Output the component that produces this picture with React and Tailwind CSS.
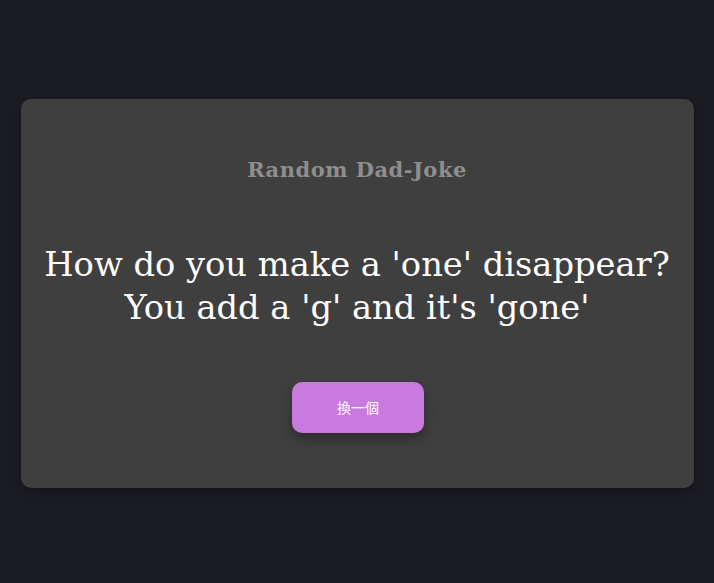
export default function App() {
  return (
    <div className="min-h-screen w-full bg-[#1b1b22] flex items-center justify-center pt-[4px]">
      <div className="w-[673px] h-[389px] bg-[#3f3f3f] rounded-[10px] shadow-[0_4px_10px_rgba(0,0,0,0.25)] flex flex-col items-center pt-[57px]">
        <h1 className="font-['DejaVu_Serif',serif] font-bold text-[21px] leading-[28px] text-[#8e8e8e] tracking-[0.5px]">
          Random Dad-Joke
        </h1>
        <p className="mt-[59px] font-['DejaVu_Serif',serif] text-[33.7px] leading-[43px] text-white text-center">
          How do you make a 'one' disappear?
          <br />
          You add a 'g' and it's 'gone'
        </p>
        <button className="mt-[53px] ml-[2px] w-[132px] h-[51px] rounded-[10px] bg-[#c87ade] text-white text-[14px] font-['Noto_Sans_CJK_TC',sans-serif] shadow-[0_6px_12px_rgba(0,0,0,0.3)]">
          換一個
        </button>
      </div>
    </div>
  );
}
